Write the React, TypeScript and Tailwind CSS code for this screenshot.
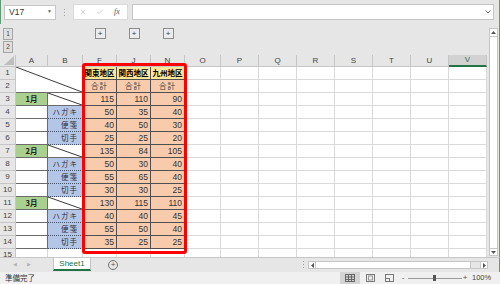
import React from 'react';
import { X, Check } from 'lucide-react';

const jp = "font-['Noto_Sans_CJK_JP',sans-serif]";

type Row = { n: number; month?: string; item?: string; v: number[] };

const rows: Row[] = [
  { n: 3, month: '1月', v: [115, 110, 90] },
  { n: 4, item: 'ハガキ', v: [50, 35, 40] },
  { n: 5, item: '便箋', v: [40, 50, 30] },
  { n: 6, item: '切手', v: [25, 25, 20] },
  { n: 7, month: '2月', v: [135, 84, 105] },
  { n: 8, item: 'ハガキ', v: [50, 30, 40] },
  { n: 9, item: '便箋', v: [55, 65, 40] },
  { n: 10, item: '切手', v: [30, 30, 25] },
  { n: 11, month: '3月', v: [130, 115, 110] },
  { n: 12, item: 'ハガキ', v: [40, 40, 45] },
  { n: 13, item: '便箋', v: [55, 50, 40] },
  { n: 14, item: '切手', v: [35, 25, 25] },
];

const hdrCols = ['A', 'B', 'F', 'J', 'N', 'O', 'P', 'Q', 'R', 'S', 'T', 'U', 'V'];
const emptyCols = ['O', 'P', 'Q', 'R', 'S', 'T', 'U', 'V'];

function Diagonal() {
  return (
    <svg className="absolute inset-0 h-full w-full" viewBox="0 0 100 100" preserveAspectRatio="none">
      <line x1="0" y1="0" x2="100" y2="100" stroke="#3a3a3a" strokeWidth="1" vectorEffect="non-scaling-stroke" />
    </svg>
  );
}

function Blank() {
  return <div className="border-b border-r border-[#dadada] bg-white" />;
}

function RowHead({ n }: { n: number }) {
  return (
    <div className="flex items-center justify-center border-b border-r border-[#c6c6c6] bg-[#e6e6e6] font-['Liberation_Sans',Arial,sans-serif] text-[8px] text-[#444]">
      {n}
    </div>
  );
}

function DataCell({ v }: { v: number }) {
  return (
    <div className="flex items-center justify-end border-b border-r border-[#4f4f4f] bg-[#f8cbad] pr-[2px] font-['Liberation_Sans',Arial,sans-serif] text-[8.5px] text-[#333]">
      {v}
    </div>
  );
}

function Sheet() {
  const cells: React.ReactNode[] = [];
  // header row
  cells.push(
    <div key="corner" className="relative border-b border-r border-[#c6c6c6] bg-[#e6e6e6]">
      <svg className="absolute bottom-[1px] right-[1px]" width="10" height="9" viewBox="0 0 10 9">
        <polygon points="10,0 10,9 0,9" fill="#bfbfbf" />
      </svg>
    </div>
  );
  hdrCols.forEach((c) => {
    if (c === 'V') {
      cells.push(
        <div key={'h' + c} className="flex items-center justify-center border-b-2 border-r border-b-[#217346] border-r-[#c6c6c6] bg-[#d2d2d2] font-['Liberation_Sans',Arial,sans-serif] text-[8px] text-[#3b6e54]">
          {c}
        </div>
      );
    } else {
      cells.push(
        <div key={'h' + c} className="flex items-center justify-center border-b border-r border-[#c6c6c6] bg-[#e6e6e6] font-['Liberation_Sans',Arial,sans-serif] text-[8px] text-[#444]">
          {c}
        </div>
      );
    }
  });
  // row 1
  cells.push(<RowHead key="r1" n={1} />);
  cells.push(
    <div key="ab12" className="relative col-span-2 row-span-2 border-b border-r border-[#6b6b6b] bg-white">
      <Diagonal />
    </div>
  );
  ['関東地区', '関西地区', '九州地区'].forEach((t) => {
    cells.push(
      <div key={t} className={`flex items-center justify-center border-b border-r border-[#4f4f4f] bg-[#ffe699] ${jp} text-[7.5px] font-bold leading-none text-black`}>
        {t}
      </div>
    );
  });
  emptyCols.forEach((c) => cells.push(<Blank key={'1' + c} />));
  // row 2
  cells.push(<RowHead key="r2" n={2} />);
  [0, 1, 2].forEach((i) => {
    cells.push(
      <div key={'g' + i} className={`flex items-center justify-center border-b border-r border-[#4f4f4f] bg-[#f8cbad] ${jp} text-[7.5px] leading-none tracking-[1px] text-[#404040]`}>
        合計
      </div>
    );
  });
  emptyCols.forEach((c) => cells.push(<Blank key={'2' + c} />));
  // rows 3-14
  rows.forEach((r) => {
    cells.push(<RowHead key={'r' + r.n} n={r.n} />);
    if (r.month) {
      cells.push(
        <div key={'a' + r.n} className={`flex items-center justify-center border-b border-r border-[#6b6b6b] bg-[#a9d08e] ${jp} text-[7.5px] font-bold leading-none text-[#222]`}>
          {r.month}
        </div>
      );
      cells.push(
        <div key={'b' + r.n} className="relative border-b border-r border-[#6b6b6b] bg-white">
          <Diagonal />
        </div>
      );
    } else {
      cells.push(<div key={'a' + r.n} className="border-b border-r border-[#6b6b6b] bg-white" />);
      cells.push(
        <div key={'b' + r.n} className={`flex items-center justify-end border-b border-r border-dotted border-[#44546a] bg-[#b4c6e7] pr-[4px] ${jp} text-[7.5px] leading-none tracking-[1px] text-[#333]`}>
          {r.item}
        </div>
      );
    }
    r.v.forEach((v, i) => cells.push(<DataCell key={'d' + r.n + i} v={v} />));
    emptyCols.forEach((c) => cells.push(<Blank key={r.n + c} />));
  });
  // row 15
  cells.push(<RowHead key="r15" n={15} />);
  hdrCols.forEach((c) => cells.push(<Blank key={'15' + c} />));

  return (
    <div className="relative h-[202px] overflow-hidden bg-white">
      <div className="grid grid-cols-[16px_32px_35px_34px_34px_34px_36px_repeat(7,38px)] grid-rows-[12px_repeat(15,13px)]">
        {cells}
      </div>
      <div className="pointer-events-none absolute left-[82px] top-[8px] h-[191px] w-[105px] rounded-[3px] border-[3px] border-[#ff0000]" />
    </div>
  );
}

function Outline() {
  return (
    <div className="grid h-[31px] grid-cols-[16px_32px_35px_34px_34px_34px_36px_repeat(7,38px)] grid-rows-[13px_13px] bg-[#e6e6e6] pt-[4px] font-['Liberation_Sans',Arial,sans-serif]">
      <div className="col-start-1 row-start-1 flex h-[12px] w-[10px] items-center justify-center justify-self-center border border-[#a6a6a6] bg-[#e0e0e0] text-[6.5px] text-[#444]">
        1
      </div>
      <div className="col-start-1 row-start-2 flex h-[12px] w-[10px] items-center justify-center justify-self-center border border-[#a6a6a6] bg-[#e0e0e0] text-[6.5px] text-[#444]">
        2
      </div>
      <div className="col-start-4 row-start-1 flex h-[11px] w-[11px] items-center justify-center justify-self-center border border-[#8c8c8c] bg-[#ececec] text-[8px] leading-none text-[#333]">
        +
      </div>
      <div className="col-start-5 row-start-1 flex h-[11px] w-[11px] items-center justify-center justify-self-center border border-[#8c8c8c] bg-[#ececec] text-[8px] leading-none text-[#333]">
        +
      </div>
      <div className="col-start-6 row-start-1 flex h-[11px] w-[11px] items-center justify-center justify-self-center border border-[#8c8c8c] bg-[#ececec] text-[8px] leading-none text-[#333]">
        +
      </div>
    </div>
  );
}

function FormulaBar() {
  return (
    <div className="flex h-[24px] items-center border-l border-[#5f9c76] bg-[#e6e6e6] font-['Liberation_Sans',Arial,sans-serif]">
      <div className="ml-[3px] flex h-[15px] w-[52px] items-center justify-between border border-[#c6c6c6] bg-white pl-[4px] pr-[3px]">
        <span className="text-[8.5px] text-[#333]">V17</span>
        <span className="text-[5px] text-[#666]">▼</span>
      </div>
      <div className="ml-[8px] flex w-[1px] flex-col gap-[2px]">
        <div className="h-[1px] w-[1px] bg-[#a0a0a0]" />
        <div className="h-[1px] w-[1px] bg-[#a0a0a0]" />
        <div className="h-[1px] w-[1px] bg-[#a0a0a0]" />
      </div>
      <div className="ml-[8px] flex h-[16px] w-[55px] items-center border border-[#dadada] bg-white">
        <X size={8} className="ml-[5px] text-[#9a9a9a]" strokeWidth={1.5} />
        <Check size={8} className="ml-[9px] text-[#9a9a9a]" strokeWidth={1.5} />
        <span className="ml-[10px] font-['Liberation_Serif',serif] text-[8px] italic text-[#555]">fx</span>
      </div>
      <div className="ml-[4px] flex h-[16px] w-[362px] items-center justify-end border border-[#c6c6c6] bg-white pr-[2px]">
        <svg width="6" height="4" viewBox="0 0 6 4">
          <polyline points="0.5,0.5 3,3 5.5,0.5" fill="none" stroke="#777" strokeWidth="1" />
        </svg>
      </div>
      <div className="flex-1" />
      <div className="h-full w-[1px] bg-[#5f9c76]" />
    </div>
  );
}

function VScroll() {
  return (
    <div className="flex w-[13px] bg-[#e6e6e6]">
      <div className="w-[2px]" />
      <div className="flex w-[9px] flex-col pb-[1px] pt-[4px]">
        <div className="flex h-[9px] items-center justify-center border border-[#c6c6c6] bg-white">
          <svg width="5" height="3" viewBox="0 0 5 3"><polygon points="2.5,0 5,3 0,3" fill="#555" /></svg>
        </div>
        <div className="flex-1 border-x border-[#c6c6c6] bg-white" />
        <div className="flex h-[8px] items-center justify-center border border-[#c6c6c6] bg-white">
          <svg width="5" height="3" viewBox="0 0 5 3"><polygon points="0,0 5,0 2.5,3" fill="#555" /></svg>
        </div>
      </div>
      <div className="w-[1px]" />
      <div className="w-[1px] bg-[#5f9c76]" />
    </div>
  );
}

function TabBar() {
  return (
    <div className="flex h-[15px] items-start border-t border-[#c6c6c6] bg-[#e6e6e6] font-['Liberation_Sans',Arial,sans-serif]">
      <div className="flex h-[13px] w-[53px] items-center gap-[10px] pl-[13px] text-[5px] text-[#b4b4b4]">
        <span>◀</span>
        <span>▶</span>
      </div>
      <div className="flex h-[13px] w-[38px] items-center justify-center border-b-2 border-l border-r border-b-[#217346] border-l-[#c6c6c6] border-r-[#c6c6c6] bg-white text-[8px] text-[#217346]">
        Sheet1
      </div>
      <div className="ml-[17px] mt-[2px] flex h-[10px] w-[10px] items-center justify-center rounded-full border border-[#707070] text-[8px] leading-none text-[#555]">
        +
      </div>
      <div className="flex-1" />
      <div className="flex h-[13px] w-[10px] flex-col items-center justify-center gap-[2px]">
        <div className="h-[1px] w-[1px] bg-[#9a9a9a]" />
        <div className="h-[1px] w-[1px] bg-[#9a9a9a]" />
        <div className="h-[1px] w-[1px] bg-[#9a9a9a]" />
      </div>
      <div className="mt-[3px] flex h-[8px] w-[180px] items-stretch border border-[#c6c6c6] bg-white">
        <div className="flex w-[7px] items-center justify-center border-r border-[#c6c6c6]">
          <svg width="3" height="5" viewBox="0 0 3 5"><polygon points="3,0 3,5 0,2.5" fill="#555" /></svg>
        </div>
        <div className="w-[155px] border-r border-[#c6c6c6]" />
        <div className="flex-1 bg-[#e6e6e6]" />
        <div className="flex w-[7px] items-center justify-center border-l border-[#c6c6c6]">
          <svg width="3" height="5" viewBox="0 0 3 5"><polygon points="0,0 3,2.5 0,5" fill="#555" /></svg>
        </div>
      </div>
      <div className="w-[11px]" />
      <div className="h-full w-[1px] bg-[#5f9c76]" />
    </div>
  );
}

function StatusBar() {
  return (
    <div className="flex h-[12px] items-center bg-[#f0f0f0] font-['Liberation_Sans',Arial,sans-serif]">
      <span className={`pl-[5px] ${jp} text-[7.5px] leading-none text-[#333]`}>準備完了</span>
      <div className="flex-1" />
      <div className="flex h-full w-[20px] items-center justify-center bg-[#d4d4d4]">
        <svg width="10" height="8" viewBox="0 0 10 8">
          <rect x="0.5" y="0.5" width="9" height="7" fill="none" stroke="#666" />
          <line x1="3.5" y1="0" x2="3.5" y2="8" stroke="#666" />
          <line x1="6.5" y1="0" x2="6.5" y2="8" stroke="#666" />
          <line x1="0" y1="3" x2="10" y2="3" stroke="#666" />
          <line x1="0" y1="5.5" x2="10" y2="5.5" stroke="#666" />
        </svg>
      </div>
      <div className="flex h-full w-[20px] items-center justify-center">
        <svg width="9" height="8" viewBox="0 0 9 8">
          <rect x="0.5" y="0.5" width="8" height="7" fill="none" stroke="#777" />
          <rect x="2.5" y="2" width="4" height="4" fill="none" stroke="#999" />
        </svg>
      </div>
      <div className="flex h-full w-[18px] items-center justify-center">
        <svg width="9" height="8" viewBox="0 0 9 8">
          <rect x="0.5" y="0.5" width="8" height="7" fill="none" stroke="#777" />
          <line x1="0" y1="4.5" x2="5" y2="4.5" stroke="#777" />
          <line x1="4.5" y1="4.5" x2="4.5" y2="8" stroke="#777" />
        </svg>
      </div>
      <div className="flex h-full w-[10px] items-center justify-center text-[8px] leading-none text-[#555]">-</div>
      <div className="relative flex h-full w-[54px] items-center">
        <div className="h-[1px] w-full bg-[#9a9a9a]" />
        <div className="absolute left-[25px] top-[3px] h-[6px] w-[3px] bg-[#555]" />
      </div>
      <div className="flex h-full w-[6px] items-center justify-center text-[8px] leading-none text-[#555]">+</div>
      <div className="ml-[4px] w-[22px] text-[7.5px] leading-none text-[#444]">100%</div>
      <div className="w-[6px]" />
    </div>
  );
}

export default function App() {
  return (
    <div className="flex h-[284px] w-[500px] flex-col overflow-hidden bg-[#e6e6e6]">
      <FormulaBar />
      <div className="flex h-[233px]">
        <div className="flex w-[487px] flex-col">
          <Outline />
          <Sheet />
        </div>
        <VScroll />
      </div>
      <TabBar />
      <StatusBar />
    </div>
  );
}
